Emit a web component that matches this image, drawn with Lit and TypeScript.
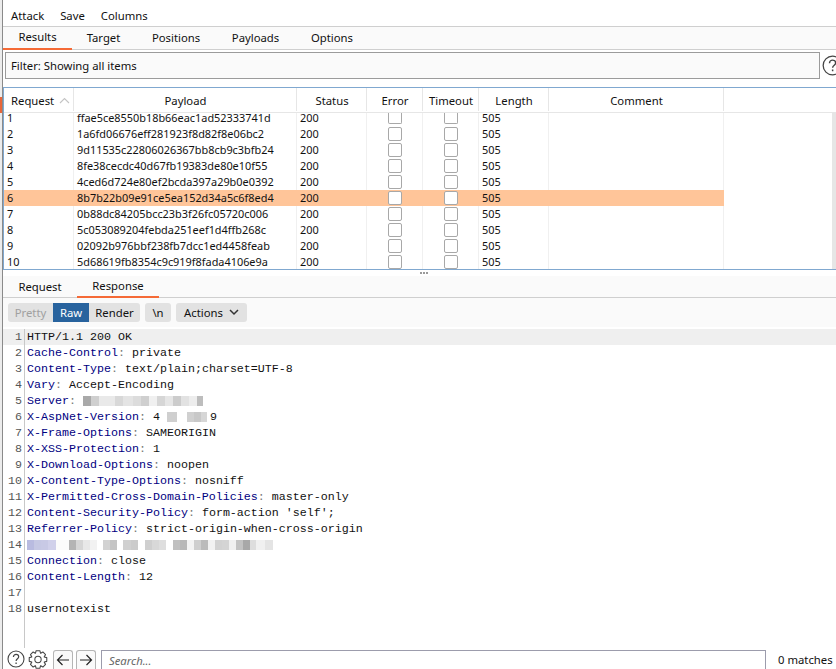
import { LitElement, html, css, svg } from "lit";
import { customElement } from "lit/decorators.js";

const rows = [
  "ffae5ce8550b18b66eac1ad52333741d",
  "1a6fd06676eff281923f8d82f8e06bc2",
  "9d11535c22806026367bb8cb9c3bfb24",
  "8fe38cecdc40d67fb19383de80e10f55",
  "4ced6d724e80ef2bcda397a29b0e0392",
  "8b7b22b09e91ce5ea152d34a5c6f8ed4",
  "0b88dc84205bcc23b3f26fc05720c006",
  "5c053089204febda251eef1d4ffb268c",
  "02092b976bbf238fb7dcc1ed4458feab",
  "5d68619fb8354c9c919f8fada4106e9a",
];

type Block = [number, string];
const mosaicA: Block[] = [[8,"#a9a9a9"],[8,"#cfcfcf"],[16,"#e9e9e9"],[8,"#d8d8d8"],[10,"#e4e4e4"],[8,"#dcdcdc"],[8,"#cfcfcf"],[8,"#f0f0f0"],[8,"#d6d6d6"],[8,"#e6e6e6"],[8,"#cccccc"],[8,"#e2e2e2"],[8,"#ededed"],[6,"#bdbdbd"]];
const mosaicB: Block[] = [[7,"#ffffff"],[10,"#cfcfcf"],[10,"#ffffff"],[7,"#d0d0d0"],[7,"#c8c8c8"],[6,"#d6d6d6"],[3,"#ffffff"]];
const mosaicC: Block[] = [[7,"#b9bbe0"],[7,"#c6c8e4"],[7,"#c8c9e5"],[8,"#d0d0ea"],[13,"#fbfbfb"],[7,"#b4b4b4"],[7,"#d6d6d6"],[7,"#e8e8e8"],[7,"#f2f2f2"],[6,"#ffffff"],[7,"#d2d2d2"],[7,"#c4c4c4"],[6,"#ffffff"],[8,"#d0d0d0"],[7,"#cbcbcb"],[7,"#ffffff"],[7,"#cfcfcf"],[7,"#d8d8d8"],[7,"#dedede"],[7,"#ffffff"],[7,"#c0c0c0"],[7,"#b8b8b8"],[7,"#f4f4f4"],[7,"#cfcfcf"],[7,"#bbbbbb"],[7,"#f2f2f2"],[7,"#d2d2d2"],[7,"#d4d4d4"],[7,"#f0f0f0"],[7,"#c2c2c2"],[7,"#a8a8a8"],[6,"#dddddd"],[9,"#f0f0f0"],[8,"#e4e4e4"]];

type Line = { k?: string; v?: string; m?: Block[]; e?: string };
const lines: Line[] = [
  { v: "HTTP/1.1 200 OK" },
  { k: "Cache-Control", v: "private" },
  { k: "Content-Type", v: "text/plain;charset=UTF-8" },
  { k: "Vary", v: "Accept-Encoding" },
  { k: "Server", m: mosaicA },
  { k: "X-AspNet-Version", v: "4", m: mosaicB, e: "9" },
  { k: "X-Frame-Options", v: "SAMEORIGIN" },
  { k: "X-XSS-Protection", v: "1" },
  { k: "X-Download-Options", v: "noopen" },
  { k: "X-Content-Type-Options", v: "nosniff" },
  { k: "X-Permitted-Cross-Domain-Policies", v: "master-only" },
  { k: "Content-Security-Policy", v: "form-action 'self';" },
  { k: "Referrer-Policy", v: "strict-origin-when-cross-origin" },
  { m: mosaicC },
  { k: "Connection", v: "close" },
  { k: "Content-Length", v: "12" },
  {},
  { v: "usernotexist" },
];

const helpIcon = (size: number) => html`<svg width=${size} height=${size} viewBox="0 0 18 18">
  <circle cx="9" cy="9" r="8" fill="none" stroke="#444" stroke-width="1.1"></circle>
  <path d="M6.4 7c0-1.6 1.2-2.6 2.7-2.6S11.7 5.400 11.700 6.800c0 1.900-2.600 2-2.600 4.200" fill="none" stroke="#444" stroke-width="1.2"></path>
  <path d="M9.100 12.400v1.500" stroke="#444" stroke-width="1.300"></path>
</svg>`;

const gearPath = (() => {
  const pts: string[] = [];
  const n = 8;
  for (let i = 0; i < n; i++) {
    const a = (i / n) * Math.PI * 2;
    const w = 0.26;
    const p = (r: number, t: number) => `${(9 + r * Math.cos(t)).toFixed(2)} ${(9 + r * Math.sin(t)).toFixed(2)}`;
    pts.push(`${i ? "L" : "M"}${p(6.4, a - w - 0.12)}L${p(8.5, a - w + 0.05)}L${p(8.5, a + w - 0.05)}L${p(6.4, a + w + 0.12)}`);
  }
  return pts.join("") + "Z";
})();

@customElement("app-root")
export class AppRoot extends LitElement {
  static styles = css`
    :host { display: block; width: 836px; height: 669px; overflow: hidden; font-family: "Noto Sans", sans-serif; font-size: 11.3px; color: #111; background: #fff; }
    .root { display: flex; height: 669px; }
    .strip { width: 2px; flex: none; border-right: 1px solid #8a8a8a; background: #ececec; display: flex; flex-direction: column; padding-top: 97px; }
    .strip i { display: block; width: 2px; height: 16px; background: #e8663a; }
    .main { flex: 1; min-width: 0; display: flex; flex-direction: column; }
    .menu { display: flex; align-items: center; gap: 16px; padding: 4px 0 0 8px; box-sizing: border-box; border-bottom: 1px solid #cfcfcf; flex: none; height: 27px; }
    .tabs { height: 23px; flex: none; box-sizing: border-box; background: #fafafa; border-bottom: 1px solid #cfcfcf; display: flex; }
    .tab { display: flex; align-items: center; justify-content: center; box-sizing: border-box; height: 23px; padding-bottom: 3px; }
    .tab.on { border-bottom: 2px solid #f56a36; }
    .filter { flex: none; height: 37px; display: flex; gap: 2px; background: #fff; padding: 2px 0 0 2px; box-sizing: border-box; }
    .fbox { width: 815px; box-sizing: border-box; height: 27px; border: 1px solid #9b9b9b; background: #fafafa; display: flex; align-items: center; padding-left: 5px; flex: none; }
    .fhelp { width: 15px; overflow: hidden; flex: none; padding-top: 3px; }
    .table { flex: none; height: 183px; box-sizing: border-box; border-top: 1px solid #80a8d0; border-bottom: 1px solid #80a8d0; border-left: 1px solid #80a8d0; background: #fff; display: flex; flex-direction: column; }
    .thead { height: 25px; flex: none; display: grid; grid-template-columns: var(--cols); box-sizing: border-box; border-bottom: 1px solid #e6e6e6; }
    .th { display: flex; align-items: center; justify-content: center; border-right: 1px solid #e6e6e6; margin-bottom: 1px; gap: 5px; padding: 1px 0 0 1px; }
    .th.req { justify-content: flex-start; padding-left: 7px; }
    .th:last-child { border-right: 0; }
    .tbody-wrap { flex: 1; min-height: 0; display: flex; }
    .tbody { flex: 1; min-width: 0; font-size: 10.9px; }
    .sb { width: 4px; background: #e6e6e6; flex: none; }
    .row { display: grid; grid-template-columns: var(--cols); height: 16px; align-items: center; }
    .row.first { height: 13px; }
    .row.end { height: 15px; }
    .row.sel .c { background: #ffc599; }
    .c { height: 16px; display: flex; align-items: center; box-sizing: border-box; border-right: 1px solid #f0f0f0; padding-left: 3px; line-height: 16px; white-space: nowrap; }
    .row.first .c { height: 13px; line-height: 10px; padding-bottom: 3px; }
    .row.end .c { height: 15px; line-height: 15px; }
    .row.first .c.ctr { padding-bottom: 0; align-items: flex-start; }
    .row.first .cb { height: 11px; border-top: 0; border-radius: 0 0 2px 2px; }
    .row.sel .c { border-right-color: #ffc599; }
    .c.ctr { justify-content: center; padding-left: 0; }
    .c.last { border-right: 0; background: #fff !important; }
    .cb { width: 14px; height: 14px; box-sizing: border-box; border: 1px solid #a8a8a8; border-radius: 2px; background: #fff; }
    .split { flex: none; height: 6px; background: #fff; display: flex; justify-content: center; align-items: center; gap: 1px; padding-left: 8px; }
    .split i { width: 2px; height: 2px; background: #9a9a9a; }
    .tabs2 { height: 22px; flex: none; box-sizing: border-box; background: #fafafa; border-bottom: 1px solid #cfcfcf; display: flex; }
    .tabs2 .tab { height: 22px; padding-bottom: 2px; }
    .tools { flex: none; height: 31px; background: #fafafa; border-bottom: 2px solid #fff; box-sizing: border-box; display: flex; padding: 5px 0 0 5px; align-items: flex-start; gap: 5px; }
    .seg { display: flex; height: 19px; border-radius: 3px; overflow: hidden; }
    .btn { background: #e2e2e2; height: 19px; display: flex; align-items: center; justify-content: center; box-sizing: border-box; gap: 6px; }
    .btn.dim { color: #a0a0a0; }
    .btn.on { background: #28639e; color: #fff; }
    .btn.round { border-radius: 3px; }
    .code { flex: 1; min-height: 0; display: flex; flex-direction: column; }
    .ln { height: 16px; display: flex; flex: none; }
    .ln.cur { background: #efefef; }
    .num { flex: none; box-sizing: border-box; text-align: right; font: 11.67px/16px "Liberation Mono", monospace; color: #555; border-right: 1px solid #c8c8c8; margin-right: 2px; padding-right: 2px; width: 22px; }
    .txt { font: 11.67px/16px "Liberation Mono", monospace; white-space: pre; color: #111; display: flex; }
    .k { color: #00007f; }
    .col { color: #777; }
    .fill { flex: 1; border-left: 1px solid #c8c8c8; margin-left: 21px; width: 0; }
    .mosaic { display: flex; height: 10px; margin-top: 3px; filter: blur(0.5px); }
    .mosaic i { display: block; height: 10px; }
    .bottom { flex: none; height: 21px; display: flex; align-items: flex-start; padding: 2px 0 0 4px; box-sizing: border-box; }
    .gear { margin-left: 3px; }
    .arrow { width: 20px; height: 19px; box-sizing: border-box; border: 1px solid #b5b5b5; border-radius: 3px 3px 0 0; border-bottom: 0; display: flex; align-items: center; justify-content: center; background: #fafafa; }
    .search { width: 665px; height: 19px; box-sizing: border-box; border: 1px solid #9c9cac; border-bottom: 0; margin-left: 5px; padding-left: 7px; font-style: italic; color: #666; flex: none; background: #fff; line-height: 19px; }
    .matches { margin-left: 12px; line-height: 19px; white-space: nowrap; }
  `;

  private cols = ["70px", "223px", "70px", "56px", "56px", "70px", "175px", "1fr"];

  render() {
    return html`<div class="root" style="--cols:${this.cols.join(" ")}">
      <div class="strip"><i></i></div>
      <div class="main">
        <div class="menu"><span>Attack</span><span>Save</span><span>Columns</span></div>
        <div class="tabs">
          <div class="tab on" style="width:69px">Results</div>
          <div class="tab" style="width:63px">Target</div>
          <div class="tab" style="width:82px">Positions</div>
          <div class="tab" style="width:77px">Payloads</div>
          <div class="tab" style="width:76px">Options</div>
        </div>
        <div class="filter">
          <div class="fbox">Filter: Showing all items</div>
          <div class="fhelp">${helpIcon(21)}</div>
        </div>
        <div class="table">
          <div class="thead">
            <div class="th req">Request
              <svg width="11" height="7" viewBox="0 0 11 7"><path d="M1 6l4.500-4.500L10 6" fill="none" stroke="#c4c4c4" stroke-width="1.100"></path></svg>
            </div>
            <div class="th">Payload</div><div class="th">Status</div><div class="th">Error</div>
            <div class="th">Timeout</div><div class="th">Length</div><div class="th">Comment</div><div class="th"></div>
          </div>
          <div class="tbody-wrap">
            <div class="tbody">
              ${rows.map((p, i) => html`<div class="row ${i === 5 ? "sel" : ""} ${i === 0 ? "first" : ""} ${i === 9 ? "end" : ""}">
                <div class="c">${i + 1}</div>
                <div class="c">${p}</div>
                <div class="c">200</div>
                <div class="c ctr"><div class="cb"></div></div>
                <div class="c ctr"><div class="cb"></div></div>
                <div class="c">505</div>
                <div class="c"></div>
                <div class="c last"></div>
              </div>`)}
            </div>
            <div class="sb"></div>
          </div>
        </div>
        <div class="split"><i></i><i></i><i></i></div>
        <div class="tabs2">
          <div class="tab" style="width:74px">Request</div>
          <div class="tab on" style="width:82px">Response</div>
        </div>
        <div class="tools">
          <div class="seg">
            <div class="btn dim" style="width:45px">Pretty</div>
            <div class="btn on" style="width:36px">Raw</div>
            <div class="btn" style="width:51px">Render</div>
          </div>
          <div class="btn round" style="width:26px">\\n</div>
          <div class="btn round" style="width:71px">Actions
            <svg width="10" height="7" viewBox="0 0 10 7"><path d="M1 1l4 4 4-4" fill="none" stroke="#333" stroke-width="1.500"></path></svg>
          </div>
        </div>
        <div class="code">
          ${lines.map((l, i) => html`<div class="ln ${i === 0 ? "cur" : ""}">
            <div class="num">${i + 1}</div>
            <div class="txt">${l.k ? html`<span class="k">${l.k}</span><span class="col">: </span>` : ""}${l.v ?? ""}${l.m
              ? html`<span class="mosaic">${l.m.map(([w, c]) => html`<i style="width:${w}px;background:${c}"></i>`)}</span>`
              : ""}${l.e ?? ""}</div>
          </div>`)}
          <div class="fill"></div>
        </div>
        <div class="bottom">
          ${helpIcon(18)}
          <svg class="gear" width="20" height="19" viewBox="0 0 18 18">
            ${svg`<path d=${gearPath} fill="none" stroke="#444" stroke-width="1" stroke-linejoin="round"></path>
            <circle cx="9" cy="9" r="3" fill="none" stroke="#444" stroke-width="1"></circle>`}
          </svg>
          <div class="arrow" style="margin-left:5px">
            <svg width="14" height="12" viewBox="0 0 14 12"><path d="M13 6H1.500M6.500 1L1.500 6l5 5" fill="none" stroke="#222" stroke-width="1.200"></path></svg>
          </div>
          <div class="arrow" style="margin-left:3px">
            <svg width="14" height="12" viewBox="0 0 14 12"><path d="M1 6h11.500M7.500 1l5 5-5 5" fill="none" stroke="#222" stroke-width="1.200"></path></svg>
          </div>
          <div class="search">Search...</div>
          <div class="matches">0 matches</div>
        </div>
      </div>
    </div>`;
  }
}
